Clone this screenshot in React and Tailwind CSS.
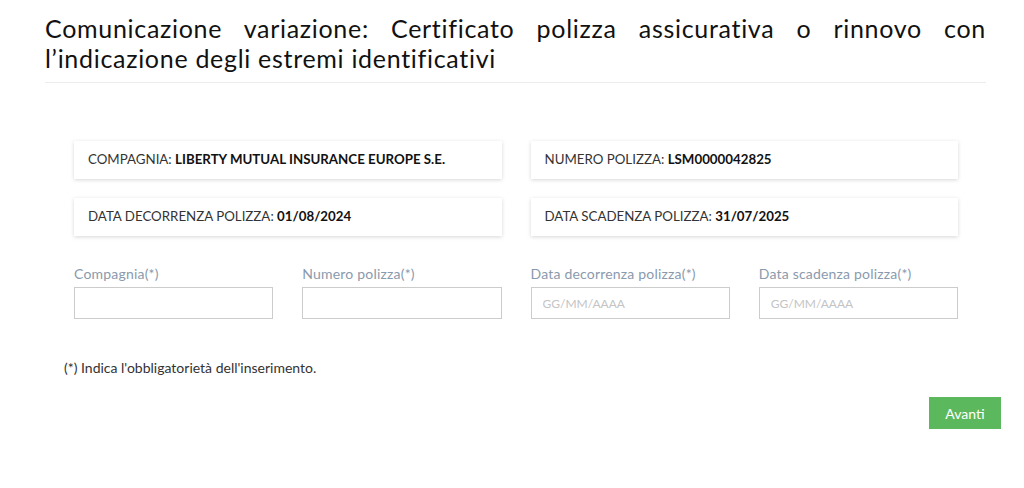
export default function App() {
  const font = { fontFamily: "Lato, 'Noto Sans', sans-serif" };
  return (
    <div className="w-[1024px] h-[488px] bg-white text-[#1a1a1a] overflow-hidden" style={font}>
      <div className="ml-[45px] w-[941px] pt-[13px]">
        <h1 className="text-[25px] leading-[30px] font-normal tracking-[0.7px] text-[#111]">
          <span className="block [text-align-last:justify] text-justify">
            Comunicazione variazione: Certificato polizza assicurativa o rinnovo con
          </span>
          <span className="block">l’indicazione degli estremi identificativi</span>
        </h1>
        <div className="mt-[9px] h-px bg-[#ececec]" />
      </div>

      <div className="ml-[74px] w-[884px] mt-[58px] grid grid-cols-2 gap-x-[29px] gap-y-[19px]">
        {[
          ["COMPAGNIA:", "LIBERTY MUTUAL INSURANCE EUROPE S.E."],
          ["NUMERO POLIZZA:", "LSM0000042825"],
          ["DATA DECORRENZA POLIZZA:", "01/08/2024"],
          ["DATA SCADENZA POLIZZA:", "31/07/2025"],
        ].map(([k, v]) => (
          <div
            key={k}
            className="h-[38px] flex items-center px-[14px] bg-white shadow-[0_1px_4px_rgba(0,0,0,0.16)] text-[13.3px] text-[#333]"
          >
            <span>{k}&nbsp;</span>
            <span className="font-bold text-[#111]">{v}</span>
          </div>
        ))}
      </div>

      <div className="ml-[74px] w-[884px] mt-[28px] grid grid-cols-4 gap-x-[29px]">
        {[
          ["Compagnia(*)", ""],
          ["Numero polizza(*)", ""],
          ["Data decorrenza polizza(*)", "GG/MM/AAAA"],
          ["Data scadenza polizza(*)", "GG/MM/AAAA"],
        ].map(([l, p]) => (
          <div key={l} className="flex flex-col">
            <label className="text-[14px] leading-[20px] tracking-[0.2px] text-[#8a9aad]">{l}</label>
            <input
              placeholder={p}
              className="mt-[3px] h-[32px] w-full border border-[#cccccc] px-[11px] text-[12px] placeholder:text-[#c4c4c4] outline-none"
              style={font}
            />
          </div>
        ))}
      </div>

      <p className="ml-[64px] mt-[40px] text-[14px] leading-[18px] text-[#333]">
        (*) Indica l'obbligatorietà dell'inserimento.
      </p>

      <div className="flex justify-end pr-[23px] mt-[20px]">
        <button className="w-[72px] h-[32px] bg-[#5cb85c] text-white text-[14px]" style={font}>
          Avanti
        </button>
      </div>
    </div>
  );
}
